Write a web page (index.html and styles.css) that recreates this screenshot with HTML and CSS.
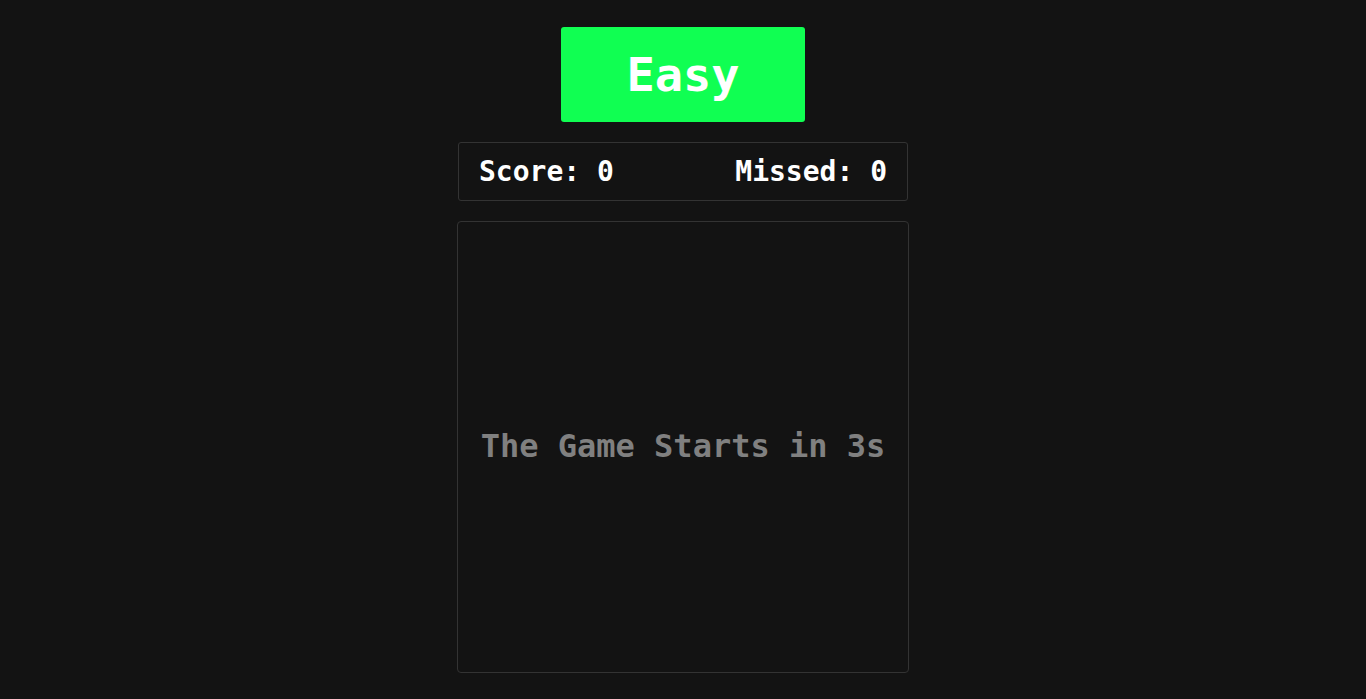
FILE: index.html
```html
<!DOCTYPE html>
<html lang="en">
<head>
<meta charset="utf-8">
<title>Game</title>
<link rel="stylesheet" href="styles.css">
</head>
<body>
<main class="app">
  <button class="level">Easy</button>
  <div class="scoreboard">
    <span class="stat">Score: 0</span>
    <span class="stat">Missed: 0</span>
  </div>
  <div class="board">
    <p class="countdown">The Game Starts in 3s</p>
  </div>
</main>
</body>
</html>
```
FILE: styles.css
```css
* { box-sizing: border-box; }
html, body {
  margin: 0;
  background: #131313;
  font-family: "DejaVu Sans Mono", "Liberation Mono", monospace;
  color: #ffffff;
}
.app {
  display: flex;
  flex-direction: column;
  align-items: center;
  padding-top: 27px;
  gap: 20px;
}
.level {
  width: 244px;
  height: 95px;
  border: none;
  border-radius: 3px;
  background: #10ff52;
  color: #ffffff;
  font-family: inherit;
  font-weight: bold;
  font-size: 47px;
  padding: 0;
}
.scoreboard {
  width: 450px;
  height: 59px;
  border: 1px solid #333333;
  border-radius: 3px;
  display: flex;
  justify-content: space-between;
  align-items: center;
  padding: 0 20px;
}
.stat {
  font-weight: bold;
  font-size: 28px;
}
.board {
  width: 452px;
  height: 452px;
  border: 1px solid #333333;
  border-radius: 4px;
  display: flex;
  align-items: center;
  justify-content: center;
}
.countdown {
  margin: 0 0 2px;
  font-weight: bold;
  font-size: 32px;
  color: #808080;
}
```
